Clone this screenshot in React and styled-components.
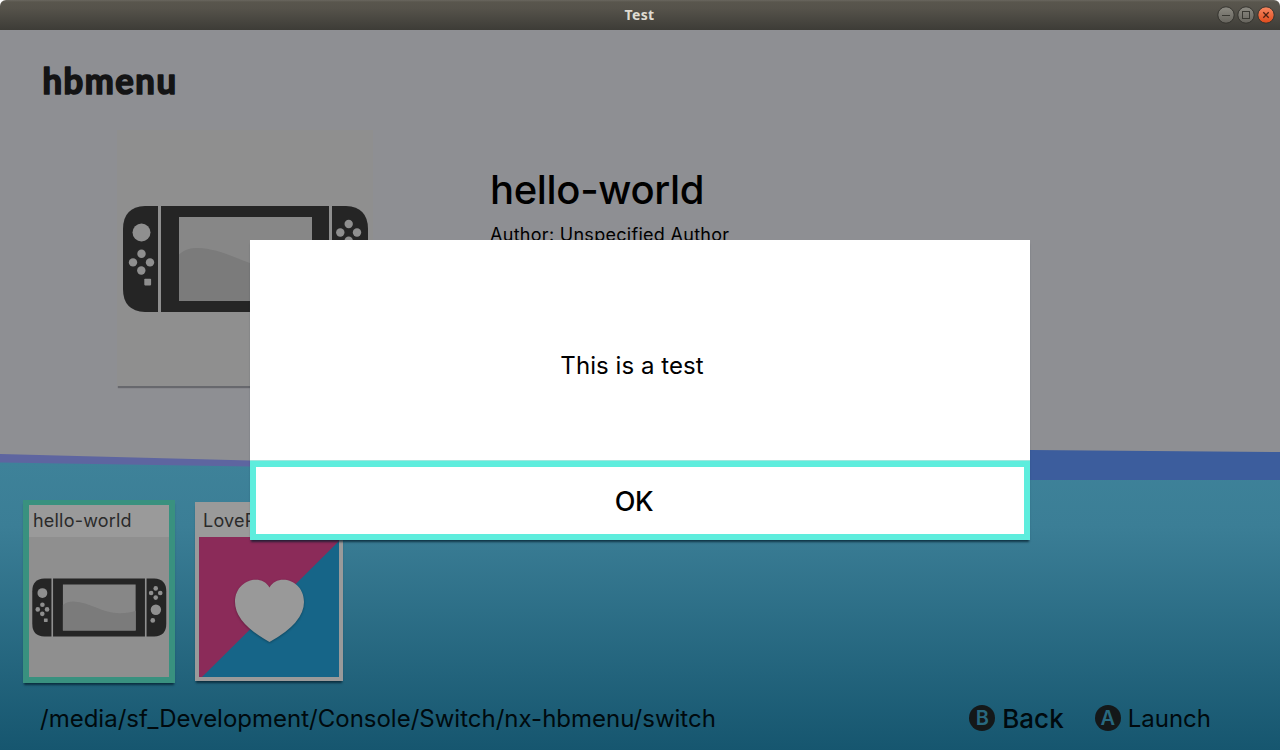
import React from "react";
import styled, { createGlobalStyle } from "styled-components";

const Global = createGlobalStyle`
  * { box-sizing: border-box; }
  body { margin: 0; background: #fff; font-family: Inter, "Liberation Sans", sans-serif; }
`;

const Window = styled.div`
  width: 1280px;
  height: 750px;
  display: flex;
  flex-direction: column;
  overflow: hidden;
`;

const TitleBar = styled.header`
  height: 30px;
  flex: none;
  display: grid;
  grid-template-columns: 1fr auto 1fr;
  align-items: center;
  padding: 0 5px 0 4px;
  border-radius: 6px 6px 0 0;
  background: linear-gradient(#6a675f 0, #59564d 2px, #56534b 8px, #3d3c37 100%);
`;

const WindowTitle = styled.div`
  grid-column: 2;
  font: 700 14px/30px "Noto Sans", sans-serif;
  color: #dfdbd2;
  letter-spacing: 0.3px;
`;

const WindowButtons = styled.div`
  display: flex;
  justify-content: flex-end;
  gap: 2px;
`;

const Screen = styled.main`
  position: relative;
  flex: 1;
  display: flex;
  flex-direction: column;
  background: #8e8f93;
`;

const Backdrop = styled.svg`
  position: absolute;
  inset: 0;
`;

const Brand = styled.div`
  position: relative;
  height: 100px;
  padding: 20px 0 0 40px;
  svg { display: block; overflow: visible; }
`;

const BrandText = styled.text`
  font-family: Lato, sans-serif;
  font-size: 36.5px;
  font-weight: 700;
  letter-spacing: 1.6px;
  fill: #141415;
  stroke: #141415;
  stroke-width: 1.7px;
  stroke-linejoin: round;
`;

const Details = styled.section`
  position: relative;
  height: 370px;
  display: flex;
  align-items: flex-start;
  gap: 117px;
  padding-left: 117px;
`;

const Cover = styled.div`
  width: 256px;
  height: 256px;
  background: #8f8f8f;
  box-shadow: 0 3px 1px -1px #67686d;
  svg { display: block; }
`;

const Info = styled.div`
  padding-top: 35px;
  white-space: nowrap;
  color: #000;
`;

const AppName = styled.h1`
  margin: 0;
  font-size: 40px;
  font-weight: 500;
  line-height: 50px;
  letter-spacing: -0.35px;
`;

const Author = styled.p`
  margin: 8px 0 0;
  font-size: 18px;
  line-height: 24px;
  letter-spacing: 0.29px;
`;

const Shelf = styled.section`
  position: relative;
  height: 188px;
  display: flex;
  align-items: flex-start;
  gap: 20px;
  padding-left: 23px;
`;

const Card = styled.article`
  width: ${(p) => (p.$selected ? 152 : 148)}px;
  margin-top: ${(p) => (p.$selected ? 0 : 2)}px;
  border: solid ${(p) => (p.$selected ? "#39917f" : "#9a9a9a")};
  border-width: ${(p) => (p.$selected ? "5px 6px 6px" : "3px 4px 4px")};
  background: #9a9a9a;
  box-shadow: 0 3px 2px -1px rgba(0, 25, 40, 0.7);
  svg { display: block; }
`;

const CardTitle = styled.div`
  height: 32px;
  padding-left: 4px;
  font-size: 18px;
  line-height: 32px;
  letter-spacing: 0.2px;
  color: #2a2a2a;
  white-space: nowrap;
  overflow: hidden;
`;

const Footer = styled.footer`
  position: relative;
  height: 62px;
  display: flex;
  justify-content: space-between;
  padding: 0 69px 0 40px;
  color: #000a0e;
  white-space: nowrap;
`;

const Path = styled.div`
  font-size: 24px;
  line-height: 62px;
`;

const Hints = styled.div`
  display: flex;
  align-items: center;
  gap: 31px;
`;

const Hint = styled.div`
  display: flex;
  align-items: center;
  gap: 7px;
  font-size: ${(p) => (p.$strong ? 26 : 24)}px;
  font-weight: ${(p) => (p.$strong ? 500 : 400)};
  line-height: 62px;
`;

const KeyCap = styled.span`
  width: 26px;
  height: 26px;
  margin-top: -2px;
  border-radius: 50%;
  background: #141819;
  color: #28697f;
  font-size: 20px;
  font-weight: 600;
  line-height: 26px;
  text-align: center;
`;

const Dialog = styled.div`
  position: absolute;
  left: 250px;
  top: 210px;
  width: 780px;
  height: 300px;
  display: flex;
  flex-direction: column;
  background: #fff;
  box-shadow: 0 3px 2px -1px rgba(0, 25, 40, 0.7);
`;

const Message = styled.p`
  flex: 1;
  margin: 0;
  padding: 110px 16px 0 0;
  text-align: center;
  font-size: 24px;
  line-height: 32px;
  letter-spacing: 0.06px;
  color: #000;
`;

const OkButton = styled.button`
  height: 79px;
  padding: 3px 12px 0 0;
  border: 6px solid #5eeddd;
  box-shadow: 0 -1px #9fe6dd;
  background: #fff;
  font: 500 27px/32px Inter, sans-serif;
  letter-spacing: -0.5px;
  color: #000;
`;

function WindowButton({ kind }) {
  const close = kind === "close";
  return (
    <svg width="18" height="18" viewBox="0 0 18 18">
      <defs>
        <linearGradient id={`btn-${kind}`} x1="0" y1="0" x2="0" y2="1">
          <stop offset="0" stopColor={close ? "#f78862" : "#8c8a82"} />
          <stop offset="1" stopColor={close ? "#df4a1b" : "#65635c"} />
        </linearGradient>
      </defs>
      <circle cx="9" cy="9" r="8.2" fill={`url(#btn-${kind})`} stroke="#34332e" />
      <g fill="none" stroke={close ? "#4b2113" : "#393832"}>
        {kind === "min" && <path d="M5 9.5h8" />}
        {kind === "max" && <rect x="5.5" y="5.5" width="7" height="7" />}
        {close && <path d="M6.3 6.3l5.4 5.4M11.7 6.3l-5.4 5.4" strokeWidth="1.3" />}
      </g>
    </svg>
  );
}

function Console({ size }) {
  return (
    <svg width={size} height={size} viewBox="0 0 256 256">
      <rect width="256" height="256" fill="#8f8f8f" />
      <g fill="#252525">
        <path d="M41 76H28Q6 77 6 99v60Q6 181 28 182H41Z" />
        <path d="M44 76H212V182H44Z" />
        <path d="M215 76H229Q251 77 251 99v60Q251 181 229 182H215Z" />
      </g>
      <path d="M62 87H195V171H62Z" fill="#878787" />
      <path d="M62 124.500C68 119 74 118 81 118C112 119 134 140 167 139.500Q184 139 195 135V171H62Z" fill="#7b7b7b" />
      <g fill="#8f8f8f">
        <circle cx="24.500" cy="102.500" r="9" />
        <circle cx="24.500" cy="123.800" r="4.200" />
        <circle cx="16" cy="132.400" r="4.200" />
        <circle cx="33" cy="132.400" r="4.200" />
        <circle cx="24.300" cy="140.500" r="4.200" />
        <rect x="27.300" y="148.800" width="6.800" height="6.600" rx=".8" />
        <circle cx="231.700" cy="94" r="4.200" />
        <circle cx="223.300" cy="102.500" r="4.200" />
        <circle cx="240" cy="102.500" r="4.200" />
        <circle cx="231.700" cy="110.800" r="4.200" />
        <circle cx="232" cy="133" r="9.500" />
        <circle cx="226.300" cy="152.500" r="4.300" />
      </g>
    </svg>
  );
}

function HeartCover() {
  return (
    <svg width="140" height="140" viewBox="0 0 140 140">
      <rect width="140" height="140" fill="#166588" />
      <path d="M0 0H140V4L3 140H0Z" fill="#8b2b59" />
      <path
        d="M70.500 105Q36 86 36 65C36 42 63 36 70.500 50.500C78 36 105 42 105 65Q105 86 70.500 105Z"
        fill="#999"
        style={{ filter: "drop-shadow(0 1px 1px rgba(0,0,0,.3))" }}
      />
    </svg>
  );
}

export default function App() {
  return (
    <Window>
      <Global />
      <TitleBar>
        <WindowTitle>Test</WindowTitle>
        <WindowButtons>
          <WindowButton kind="min" />
          <WindowButton kind="max" />
          <WindowButton kind="close" />
        </WindowButtons>
      </TitleBar>
      <Screen>
        <Backdrop width="1280" height="720" viewBox="0 0 1280 720">
          <defs>
            <linearGradient id="sea" x1="0" y1="0" x2="0" y2="1">
              <stop offset="0" stopColor="#3e8299" />
              <stop offset=".22" stopColor="#3b7e96" />
              <stop offset="1" stopColor="#16566f" />
            </linearGradient>
          </defs>
          <path d="M0 424L250 430.500L640 438V470H0Z" fill="#5e65a0" />
          <path d="M640 425L1030 420L1280 422V470H640Z" fill="#3c5d9d" />
          <path d="M0 432.500L250 436.500Q640 448 1030 450H1280V720H0Z" fill="url(#sea)" />
        </Backdrop>
        <Brand>
          <svg width="160" height="64" viewBox="0 0 160 64">
            <BrandText x="2.500" y="43.800" textLength="135" lengthAdjust="spacingAndGlyphs">hbmenu</BrandText>
          </svg>
        </Brand>
        <Details>
          <Cover><Console size={256} /></Cover>
          <Info>
            <AppName>hello-world</AppName>
            <Author>Author: Unspecified Author</Author>
          </Info>
        </Details>
        <Shelf>
          <Card $selected>
            <CardTitle>hello-world</CardTitle>
            <Console size={140} />
          </Card>
          <Card>
            <CardTitle>LovePotion</CardTitle>
            <HeartCover />
          </Card>
        </Shelf>
        <Footer>
          <Path>/media/sf_Development/Console/Switch/nx-hbmenu/switch</Path>
          <Hints>
            <Hint $strong><KeyCap>B</KeyCap>Back</Hint>
            <Hint><KeyCap>A</KeyCap>Launch</Hint>
          </Hints>
        </Footer>
        <Dialog>
          <Message>This is a test</Message>
          <OkButton>OK</OkButton>
        </Dialog>
      </Screen>
    </Window>
  );
}
